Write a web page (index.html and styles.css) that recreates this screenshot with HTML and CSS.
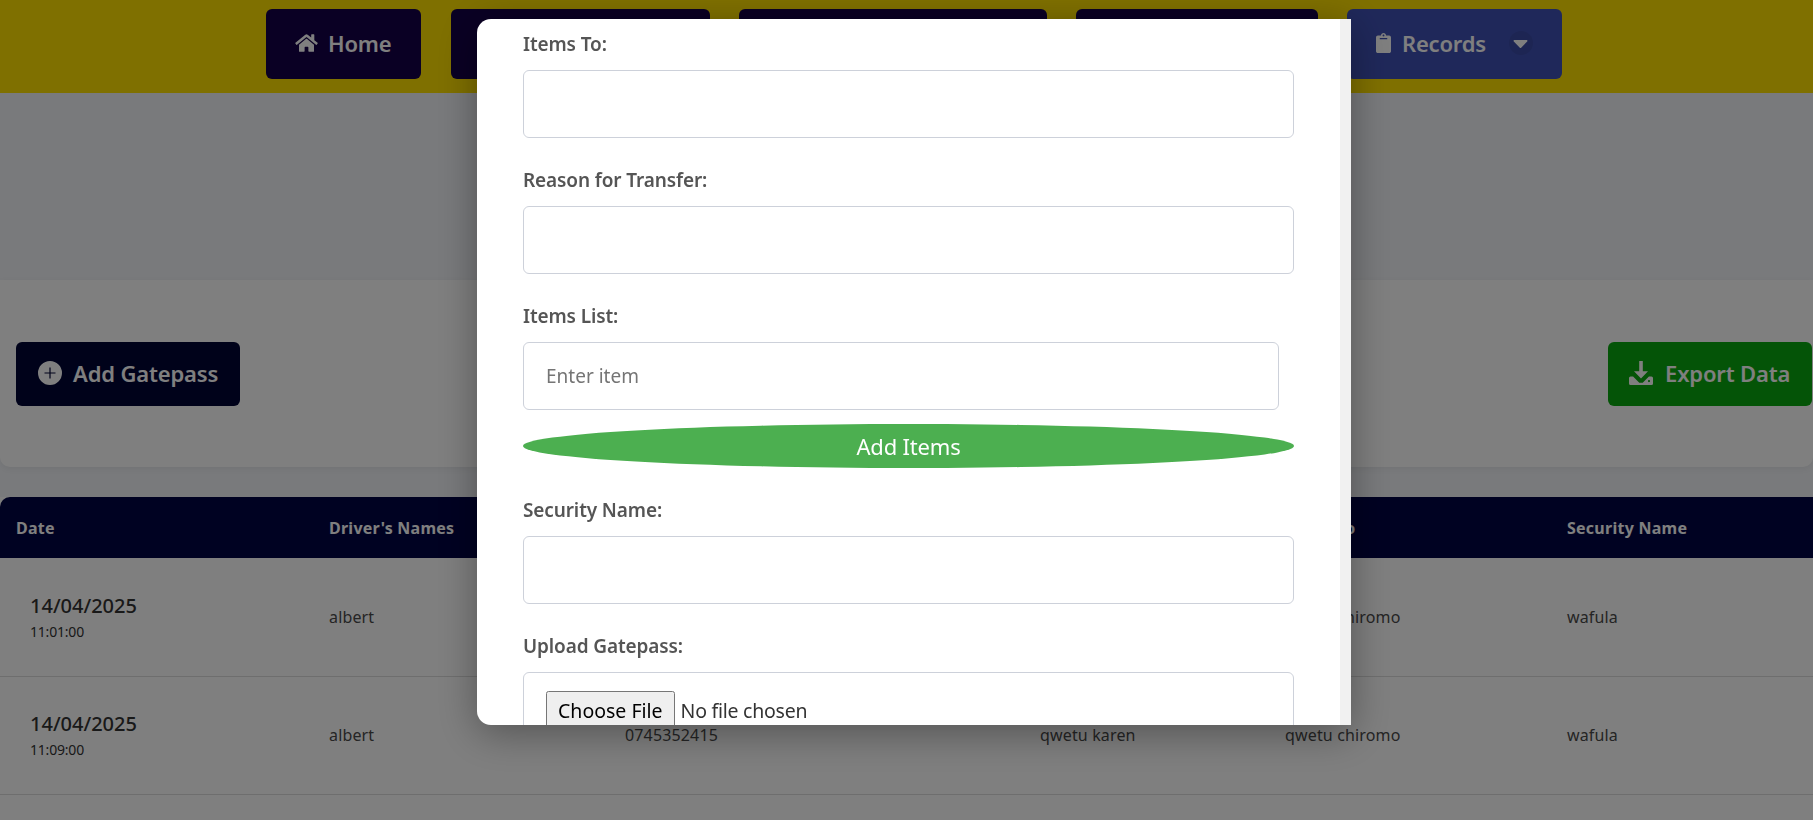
FILE: index.html
```html
<!DOCTYPE html>
<html lang="en">
<head>
<meta charset="utf-8">
<title>Gatepass</title>
<link rel="stylesheet" href="styles.css">
</head>
<body>
<header class="topbar">
  <nav class="nav">
    <a class="nav-btn nav-home">
      <svg class="ic ic-home" viewBox="0 0 576 512"><path d="M280.37 148.26L96 300.11V464a16 16 0 0 0 16 16l112.06-.29a16 16 0 0 0 15.92-16V368a16 16 0 0 1 16-16h64a16 16 0 0 1 16 16v95.64a16 16 0 0 0 16 16.05L464 480a16 16 0 0 0 16-16V300L295.67 148.26a12.19 12.19 0 0 0-15.3 0zM571.6 251.47L488 182.56V44.05a12 12 0 0 0-12-12h-56a12 12 0 0 0-12 12v72.61L318.47 43a48 48 0 0 0-61 0L4.34 251.47a12 12 0 0 0-1.6 16.9l25.5 31A12 12 0 0 0 45.15 301l235.22-193.74a12.19 12.19 0 0 1 15.3 0L530.9 301a12 12 0 0 0 16.9-1.6l25.5-31a12 12 0 0 0-1.7-16.93z"/></svg>
      Home
    </a>
    <a class="nav-btn nav-a"></a>
    <a class="nav-btn nav-b"></a>
    <a class="nav-btn nav-c"></a>
    <a class="nav-btn nav-records">
      <svg class="ic ic-clip" viewBox="0 0 384 512"><path d="M384 112v352c0 26.51-21.49 48-48 48H48c-26.51 0-48-21.49-48-48V112c0-26.51 21.49-48 48-48h80c0-35.29 28.71-64 64-64s64 28.71 64 64h80c26.51 0 48 21.49 48 48zM192 40c-13.255 0-24 10.745-24 24s10.745 24 24 24 24-10.745 24-24-10.745-24-24-24m96 114v-20a6 6 0 0 0-6-6H102a6 6 0 0 0-6 6v20a6 6 0 0 0 6 6h180a6 6 0 0 0 6-6z"/></svg>
      Records
      <span class="caret"><svg viewBox="0 0 320 512"><path d="M31.3 192h257.3c17.8 0 26.7 21.5 14.1 34.1L174.1 354.8c-7.8 7.8-20.5 7.8-28.3 0L17.2 226.1C4.6 213.5 13.5 192 31.3 192z"/></svg></span>
    </a>
  </nav>
</header>

<main class="page">
  <section class="actions">
    <button class="action add">
      <svg class="ic ic-plus" viewBox="0 0 24 24"><path fill-rule="evenodd" d="M12 0a12 12 0 1 0 0 24a12 12 0 1 0 0-24zM11.4 6.5h1.2v4.9h4.9v1.2h-4.9v4.9h-1.2v-4.9H6.5v-1.2h4.9z"/></svg>
      Add Gatepass
    </button>
    <button class="action export">
      <svg class="ic ic-down" viewBox="0 0 24 24"><path d="M10.2 0h3.6v10.2H19l-7 7.2-7-7.2h5.2z"/><path fill-rule="evenodd" d="M1.5 15.500h2.600l6.200 6.200h3.400l6.200-6.200h2.600a1.500 1.500 0 0 1 1.500 1.500v5.500a1.500 1.500 0 0 1-1.500 1.500h-21A1.500 1.500 0 0 1 0 22.500V17a1.500 1.500 0 0 1 1.500-1.500zM20 19a1.100 1.100 0 1 0 0 2.200a1.100 1.100 0 1 0 0-2.200z"/></svg>
      Export Data
    </button>
  </section>

  <table class="grid">
    <thead>
      <tr>
        <th class="c1">Date</th><th class="c2">Driver's Names</th><th class="c3">Phone</th><th class="c4">Items From</th><th class="c5">Items To</th><th class="c6">Security Name</th>
      </tr>
    </thead>
    <tbody>
      <tr>
        <td class="date"><strong>14/04/2025</strong><small>11:01:00</small></td>
        <td>albert</td><td>0745352415</td><td>qwetu karen</td><td>qwetu chiromo</td><td>wafula</td>
      </tr>
      <tr>
        <td class="date"><strong>14/04/2025</strong><small>11:09:00</small></td>
        <td>albert</td><td>0745352415</td><td>qwetu karen</td><td>qwetu chiromo</td><td>wafula</td>
      </tr>
      <tr>
        <td class="date"></td><td></td><td></td><td></td><td></td><td></td>
      </tr>
    </tbody>
  </table>
</main>

<div class="overlay"></div>

<div class="modal">
  <form class="modal-body">
    <div class="field">
      <label>Items To:</label>
      <input class="control" type="text">
    </div>
    <div class="field">
      <label>Reason for Transfer:</label>
      <input class="control" type="text">
    </div>
    <div class="field">
      <label>Items List:</label>
      <input class="control control-short" type="text" placeholder="Enter item">
      <button class="add-items" type="button">Add Items</button>
    </div>
    <div class="field">
      <label>Security Name:</label>
      <input class="control" type="text">
    </div>
    <div class="field">
      <label>Upload Gatepass:</label>
      <div class="control file"><input class="file-input" type="file"></div>
    </div>
  </form>
  <div class="scroll-track"></div>
</div>
</body>
</html>
```
FILE: styles.css
```css
* { box-sizing: border-box; }
html { height: 820px; overflow: hidden; }
body {
  margin: 0;
  height: 820px;
  overflow: hidden;
  background: #f2f4f8;
  font-family: "Noto Sans", "Open Sans", sans-serif;
  color: #333;
}
.topbar {
  height: 93px;
  background: #ffe000;
  padding: 9px 0 0 266px;
}
.nav { display: flex; gap: 29px; }
.nav-btn {
  height: 70px;
  display: flex;
  align-items: center;
  padding: 0 0 2px 29px;
  background: #140048;
  color: #fff;
  border-radius: 6px;
  font-size: 22px;
  font-weight: 600;
  letter-spacing: -0.2px;
}
.nav-home { width: 155px; margin-right: 1px; }
.nav-a { width: 259px; }
.nav-b { width: 308px; }
.nav-c { width: 242px; }
.nav-records { width: 215px; background: #3f51b5; }
.ic { fill: currentColor; flex: none; }
.ic-home { width: 23px; height: 20px; margin-right: 10px; }
.ic-clip { width: 15px; height: 20px; margin-right: 11px; }
.caret {
  width: 24px;
  height: 24px;
  margin-left: 23px;
  display: flex;
  align-items: center;
  justify-content: center;
  border-radius: 50%;
  background: rgba(0, 0, 0, 0.08);
}
.caret svg { width: 15px; height: 24px; fill: #fff; }

.page { height: 727px; padding-top: 187px; overflow: hidden; }
.actions {
  height: 187px;
  background: #fff;
  border-radius: 0 0 10px 10px;
  padding: 62px 1px 0 16px;
  display: flex;
  justify-content: space-between;
  align-items: flex-start;
  box-shadow: 0 2px 6px rgba(0, 0, 0, 0.06);
}
.action {
  height: 64px;
  border: 0;
  border-radius: 6px;
  color: #fff;
  display: flex;
  align-items: center;
  padding-bottom: 3px;
  font: 600 22px "Noto Sans", "Open Sans", sans-serif;
  letter-spacing: -0.15px;
}
.add { width: 224px; padding-left: 22px; background: #000434; }
.export { width: 204px; padding-left: 21px; background: #08a80e; }
.ic-plus { width: 24px; height: 24px; margin-right: 11px; }
.ic-down { width: 24px; height: 24px; margin-right: 12px; }

.grid {
  width: 100%;
  margin-top: 30px;
  border-collapse: collapse;
  table-layout: fixed;
  font-size: 16px;
  background: #fff;
}
.grid th {
  height: 61px;
  padding: 0 0 0 16px;
  background: #000444;
  color: #fff;
  text-align: left;
  font-size: 16px;
  font-weight: 700;
  letter-spacing: 0.25px;
}
.grid th.c1 { border-top-left-radius: 10px; }
.c1 { width: 313px; }
.c2 { width: 296px; }
.c3 { width: 415px; }
.c4 { width: 245px; }
.c5 { width: 282px; }
.grid td {
  height: 118px;
  padding: 0 0 0 16px;
  border-bottom: 1px solid #ddd;
  letter-spacing: 0.15px;
  color: #4a4a4a;
}
.grid td.date { padding-left: 30px; color: #333; }
.date strong { display: block; font-size: 20px; line-height: 26px; font-weight: 500; letter-spacing: 0; }
.date small { display: block; font-size: 14px; margin-top: 3px; letter-spacing: -0.2px; }

.overlay {
  position: fixed;
  inset: 0;
  background: rgba(0, 0, 0, 0.5);
}
.modal {
  position: fixed;
  left: 477px;
  top: 19px;
  width: 874px;
  height: 706px;
  background: #fff;
  border-radius: 14px 0 0 14px;
  overflow: hidden;
  display: flex;
  box-shadow: 0 8px 40px rgba(0, 0, 0, 0.35);
}
.modal-body {
  flex: 1;
  padding: 8px 46px 0 46px;
  min-width: 0;
}
.scroll-track { width: 11px; background: #f1f1f1; flex: none; }
.field { margin-bottom: 25.5px; }
.field label {
  display: block;
  height: 35px;
  margin-bottom: 8px;
  line-height: 34px;
  font-size: 19px;
  font-weight: 600;
  letter-spacing: -0.12px;
  color: #555;
}
.control {
  display: block;
  width: 771px;
  height: 67.5px;
  padding: 0 22px;
  border: 1px solid #cdd1da;
  border-radius: 6px;
  background: #fff;
  font: 19px "Noto Sans", "Open Sans", sans-serif;
  outline: 0;
}
.control-short { width: 756px; }
.control::placeholder { color: #757575; opacity: 1; }
.add-items {
  display: block;
  width: 771px;
  height: 44px;
  margin-top: 14px;
  border: 0;
  border-radius: 50%;
  background: #4caf50;
  color: #fff;
  font: 22px "Noto Sans", "Open Sans", sans-serif;
  letter-spacing: -0.2px;
}
.file { padding: 18px 22px; height: 90px; }
.file-input {
  font: 19.5px "Noto Sans", "Open Sans", sans-serif;
  letter-spacing: -0.25px;
  color: #333;
}
.file-input::file-selector-button {
  height: 38px;
  padding: 0 10px;
  margin-right: 6px;
  font: inherit;
  color: #000;
}
```
